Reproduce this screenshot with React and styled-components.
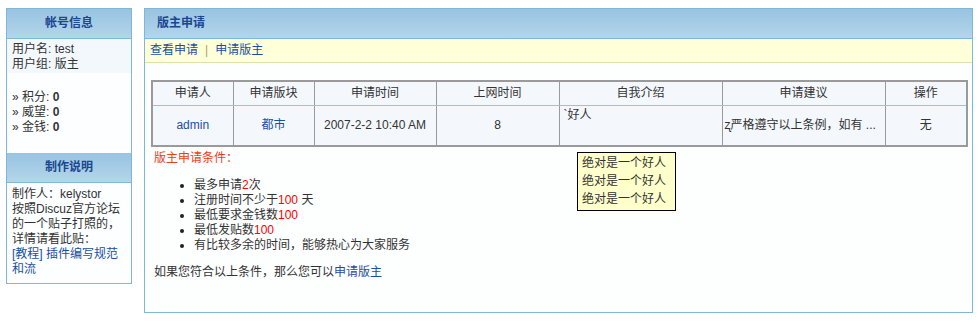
import React from "react";
import styled, { createGlobalStyle } from "styled-components";

const Global = createGlobalStyle`
  body {
    margin: 0;
    background: #fff;
    color: #333;
    font: 12px/15px "Liberation Sans", "Noto Sans CJK SC", sans-serif;
  }
  a { color: #1a4fa0; text-decoration: none; }
`;

const Page = styled.div`
  display: flex;
  align-items: flex-start;
  gap: 12px;
  padding: 8px 5px 0 6px;
`;

const Sidebar = styled.div`
  width: 126px;
  flex: none;
  box-sizing: border-box;
  border: 1px solid #80b6d8;
  background: #fcfeff;
`;

const HeadBar = styled.div`
  height: 29px;
  line-height: 29px;
  border-bottom: 1px solid #7eb9dd;
  background: linear-gradient(#98c3e2, #b3d6ea);
  color: #1b4690;
  font-weight: 700;
  text-align: ${(p) => (p.$center ? "center" : "left")};
  padding-left: ${(p) => (p.$center ? "0" : "12px")};
`;

const UserInfo = styled.div`
  padding: 3px 5px 1px;
  background: #f3f8fc;
`;

const Stats = styled.div`
  padding: 17px 5px 18px;
  b { font-weight: 700; }
`;

const About = styled.div`
  padding: 4px 5px 6px;
`;

const Main = styled.div`
  position: relative;
  flex: 1;
  border: 1px solid #80b6d8;
  background: #fdfefe;
  padding-bottom: 32px;
`;

const SubBar = styled.div`
  height: 23px;
  line-height: 23px;
  padding-left: 5px;
  background: #ffffd8;
  border-bottom: 1px solid #e0dfb0;
`;

const Sep = styled.span`
  color: #b0a060;
  margin: 0 7px;
`;

const Table = styled.table`
  width: calc(100% - 10px);
  margin: 17px 4px 0 6px;
  border-collapse: collapse;
  table-layout: fixed;
  border: 2px solid #9a9a9a;
`;

const Th = styled.th`
  height: 23px;
  font-weight: 400;
  border: 1px solid #9a9a9a;
  border-bottom: 1px solid #8fc6e6;
  background: #f4f8fc;
  text-align: center;
  padding: 0;
`;

const Td = styled.td`
  height: 37px;
  border: 1px solid #9a9a9a;
  background: #f4f8fc;
  padding: ${(p) => (p.$top ? "2px 4px 0" : "0 2px")};
  vertical-align: ${(p) => (p.$top ? "top" : "middle")};
  text-align: ${(p) => p.$align || "center"};
  white-space: nowrap;
  overflow: hidden;
`;

const Body = styled.div`
  padding: 4px 0 0 9px;
`;

const CondTitle = styled.div`
  color: #f03c10;
`;

const List = styled.ul`
  margin: 12px 0 0;
  padding-left: 40px;
  list-style: disc;
  li::marker { color: #222; }
`;

const Red = styled.span`
  color: #ff0000;
`;

const Final = styled.div`
  margin-top: 12px;
`;

const Tip = styled.div`
  position: absolute;
  left: 432px;
  top: 143px;
  width: 89px;
  padding: 1px 4px 2px;
  border: 1px solid #000;
  background: #ffffcc;
  line-height: 18px;
  color: #333;
`;

const cols = [81, 81, 122, 123, 163, 163, 82];

export default function App() {
  return (
    <>
      <Global />
      <Page>
        <Sidebar>
          <HeadBar $center>帐号信息</HeadBar>
          <UserInfo>
            用户名: test
            <br />
            用户组: 版主
          </UserInfo>
          <Stats>
            » 积分: <b>0</b>
            <br />» 威望: <b>0</b>
            <br />» 金钱: <b>0</b>
          </Stats>
          <HeadBar $center>制作说明</HeadBar>
          <About>
            制作人：kelystor
            <br />
            按照Discuz官方论坛
            <br />
            的一个贴子打照的，
            <br />
            详情请看此贴：
            <br />
            <a href="#">
              [教程] 插件编写规范
              <br />
              和流
            </a>
          </About>
        </Sidebar>
        <Main>
          <HeadBar>版主申请</HeadBar>
          <SubBar>
            <a href="#">查看申请</a>
            <Sep>|</Sep>
            <a href="#">申请版主</a>
          </SubBar>
          <Table>
            <colgroup>
              {cols.map((w, i) => (
                <col key={i} style={{ width: w }} />
              ))}
            </colgroup>
            <thead>
              <tr>
                {["申请人", "申请版块", "申请时间", "上网时间", "自我介绍", "申请建议", "操作"].map((h) => (
                  <Th key={h}>{h}</Th>
                ))}
              </tr>
            </thead>
            <tbody>
              <tr>
                <Td><a href="#">admin</a></Td>
                <Td><a href="#">都市</a></Td>
                <Td>2007-2-2 10:40 AM</Td>
                <Td>8</Td>
                <Td $top $align="left">`好人</Td>
                <Td $align="left">ʐ严格遵守以上条例，如有 ...</Td>
                <Td>无</Td>
              </tr>
            </tbody>
          </Table>
          <Body>
            <CondTitle>版主申请条件：</CondTitle>
            <List>
              <li>最多申请<Red>2</Red>次</li>
              <li>注册时间不少于<Red>100</Red> 天</li>
              <li>最低要求金钱数<Red>100</Red></li>
              <li>最低发贴数<Red>100</Red></li>
              <li>有比较多余的时间，能够热心为大家服务</li>
            </List>
            <Final>
              如果您符合以上条件，那么您可以<a href="#">申请版主</a>
            </Final>
          </Body>
          <Tip>
            绝对是一个好人
            <br />
            绝对是一个好人
            <br />
            绝对是一个好人
          </Tip>
        </Main>
      </Page>
    </>
  );
}
